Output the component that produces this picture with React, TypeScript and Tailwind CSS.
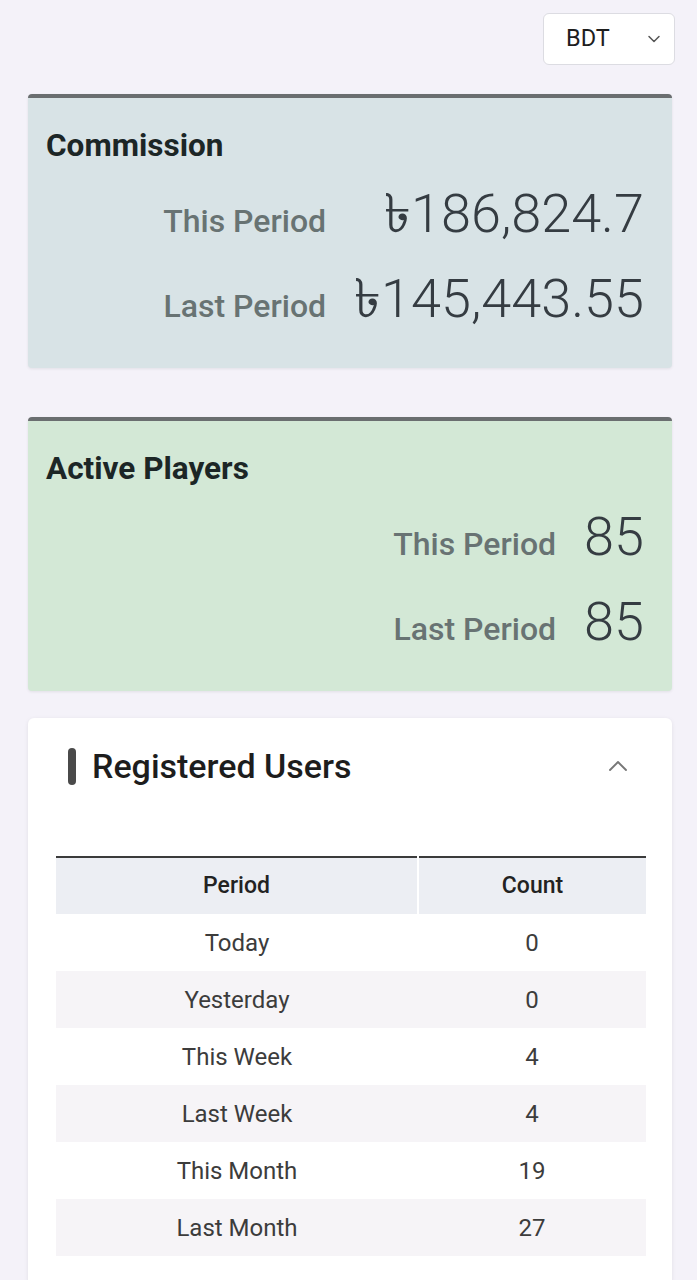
import { ChevronDown, ChevronUp } from 'lucide-react'

const font = { fontFamily: 'Roboto, "Noto Sans", "DejaVu Sans", sans-serif' }

type Row = { label: string; value: string }

function StatCard({ title, rows, bg }: { title: string; rows: Row[]; bg: string }) {
  return (
    <div className={`rounded-sm border-t-4 border-[#6a6e70] ${bg} pl-[18px] pr-[28px] pt-[30px] pb-[30px] shadow-[0_1px_3px_rgba(0,0,0,0.08)]`}>
      <h2 className="text-[31.5px] font-bold leading-[36px] text-[#1c2626]">{title}</h2>
      <div className="mt-[18px] grid grid-cols-[auto_auto] justify-end items-baseline gap-x-[28px] gap-y-[14px]">
        {rows.map((r) => (
          <div key={r.label} className="contents">
            <div className="text-right text-[32px] font-medium leading-[64px] text-[#687373]">{r.label}</div>
            <div className="text-right text-[54px] font-light leading-[64px] text-[#353c42]">{r.value}</div>
          </div>
        ))}
      </div>
    </div>
  )
}

const users = [
  { period: 'Today', count: 0 },
  { period: 'Yesterday', count: 0 },
  { period: 'This Week', count: 4 },
  { period: 'Last Week', count: 4 },
  { period: 'This Month', count: 19 },
  { period: 'Last Month', count: 27 },
]

export default function App() {
  return (
    <div style={font} className="min-h-screen bg-[#f4f2f9] pl-[28px] pr-[25px] pt-[13px] pb-10">
      {/* Currency select */}
      <div className="flex justify-end">
        <button className="mr-[-3px] flex h-[52px] w-[132px] items-center justify-between rounded-md border border-[#dcdce2] bg-white pl-[22px] pr-[10px] text-[23.5px] text-[#1e1e1e]">
          <span>BDT</span>
          <ChevronDown size={20} strokeWidth={1.8} className="text-[#555]" />
        </button>
      </div>

      <div className="mt-[29px] flex flex-col gap-[49px]">
        <StatCard
          title="Commission"
          bg="bg-[#d8e3e6]"
          rows={[
            { label: 'This Period', value: '৳186,824.7' },
            { label: 'Last Period', value: '৳145,443.55' },
          ]}
        />
        <StatCard
          title="Active Players"
          bg="bg-[#d3e8d6]"
          rows={[
            { label: 'This Period', value: '85' },
            { label: 'Last Period', value: '85' },
          ]}
        />
      </div>

      {/* Registered users */}
      <div className="mt-[27px] rounded-md bg-white pl-[28px] pr-[26px] pt-[28px] pb-[30px] shadow-[0_1px_4px_rgba(0,0,0,0.08)]">
        <div className="flex items-center justify-between pl-[12px] pr-[12px]">
          <div className="flex items-center gap-[16px]">
            <span className="block h-[37px] w-[8px] rounded-full bg-[#4a4a4a]" />
            <h3 className="text-[34px] font-medium leading-[40px] text-[#1d1d1d]">Registered Users</h3>
          </div>
          <ChevronUp size={32} strokeWidth={1.4} className="text-[#777]" />
        </div>

        <table className="mt-[70px] w-full border-t-2 border-[#3b3b3b] text-[24px] text-[#3c3c3c]">
          <thead>
            <tr className="h-[57px] bg-[#eceef3]">
              <th className="w-[362px] border-r-2 border-white text-[23px] font-medium text-[#222]">Period</th>
              <th className="text-[23px] font-medium text-[#222]">Count</th>
            </tr>
          </thead>
          <tbody>
            {users.map((u, i) => (
              <tr key={u.period} className={`h-[57px] ${i % 2 === 1 ? 'bg-[#f6f4f7]' : 'bg-white'}`}>
                <td className="text-center">{u.period}</td>
                <td className="text-center">{u.count}</td>
              </tr>
            ))}
          </tbody>
        </table>
      </div>
    </div>
  )
}
